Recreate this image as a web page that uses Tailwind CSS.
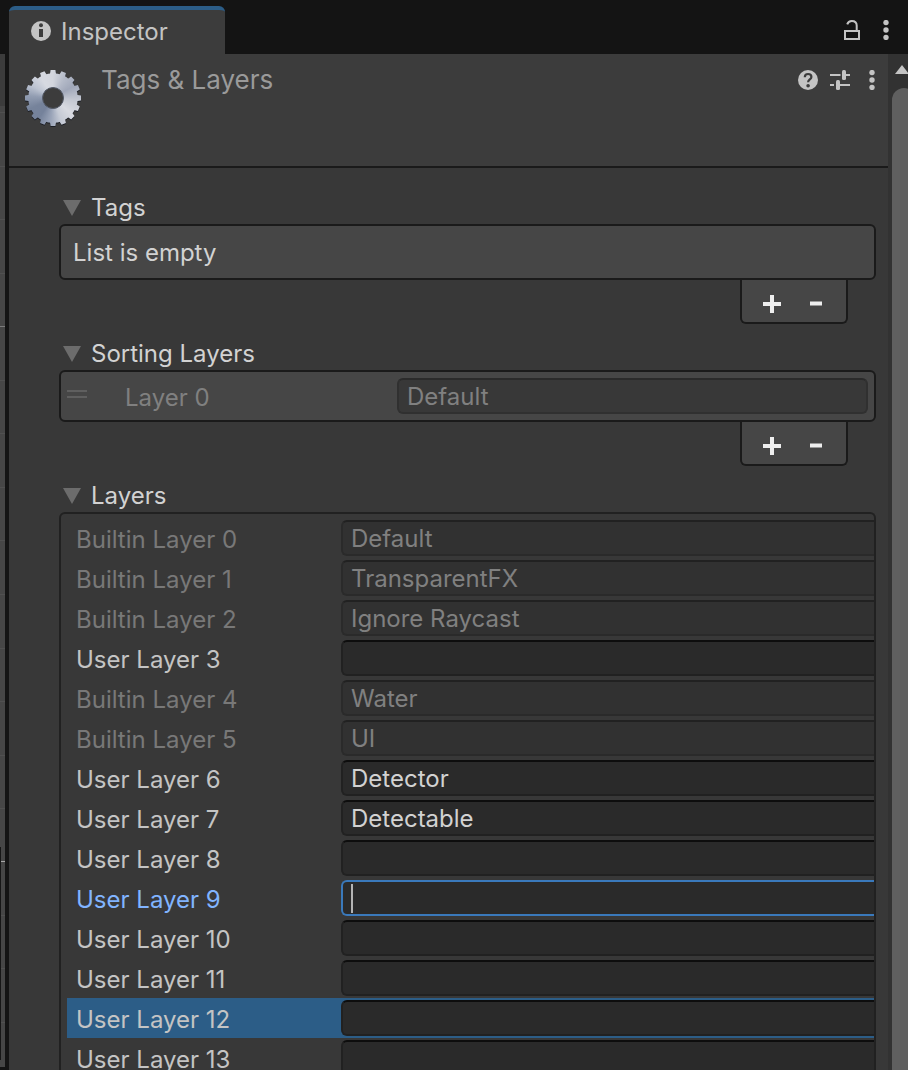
<!DOCTYPE html>
<html lang="en">
<head>
<meta charset="utf-8">
<title>Inspector</title>
<script src="https://cdn.jsdelivr.net/npm/@tailwindcss/browser@4"></script>
</head>
<body class="flex h-screen overflow-hidden bg-[#141414] font-['Inter',sans-serif] text-2xl text-[#c4c4c4]">

<!-- edge of the neighbouring panel -->
<svg class="mt-[54px] w-[5px] h-[1013px] shrink-0" viewBox="0 0 5 1013" aria-hidden="true">
  <rect width="5" height="52" fill="#3c3c3c"/>
  <rect y="52" width="5" height="961" fill="#464646"/>
  <path stroke="#505050" d="M0 58.500h5M0 112.500h5M0 165.500h5M0 219.500h5M0 326.500h5M0 379.500h5M0 433.500h5M0 486.500h5M0 540.500h5M0 594.500h5M0 647.500h5M0 701.500h5M0 754.500h5M0 861.500h5M0 914.500h5M0 968.500h5"/>
  <path stroke="#7c7c7c" d="M0 272.500h5"/>
  <path stroke="#a8a8a8" d="M0 807.500h5"/>
  <rect y="793" width="1" height="213" fill="#161616"/>
</svg>

<main class="ml-1 flex min-w-0 grow flex-col">
  <header class="flex h-[54px] shrink-0 items-end justify-between">
    <div class="flex h-12 w-[216px] items-center gap-2.5 rounded-t-md border-t-4 border-[#2c5d87] bg-[#3c3c3c] pl-[22px]">
      <svg class="mb-0.5 size-5" viewBox="0 0 20 20" aria-hidden="true"><circle cx="10" cy="10" r="10" fill="#c4c4c4"/><circle cx="10" cy="4.300" r="2" fill="#3c3c3c"/><path d="M8 8h4v8H8z" fill="#3c3c3c"/></svg>
      <h1 class="leading-8">Inspector</h1>
    </div>
    <div class="flex gap-[18px] pr-[16px] pb-3.5">
      <button class="block" aria-label="Lock"><svg class="h-5 w-5" viewBox="0 0 20 20" fill="none" stroke="#c4c4c4" stroke-width="2"><path d="M3 11h14v8H3zM5.200 4.300C6 2 7.500 1 9.800 1c3.400 0 4.900 1.800 4.900 4.600V11"/></svg></button>
      <button class="block" aria-label="Window menu"><svg class="h-5 w-3" viewBox="0 0 12 20" fill="#c4c4c4"><circle cx="6" cy="2.600" r="2.700"/><circle cx="6" cy="10" r="2.700"/><circle cx="6" cy="17.400" r="2.700"/></svg></button>
    </div>
  </header>

  <div class="flex min-h-0 grow bg-[#383838]">
    <div class="min-w-0 grow overflow-hidden">
      <section class="flex h-[114px] items-start border-b-2 border-[#1a1a1a] bg-[#3c3c3c] pl-4 pr-2.5">
        <svg class="mt-4 h-[58px] w-14 shrink-0" viewBox="0 0 56 58" aria-hidden="true">
          <defs>
            <g id="tooth"><path d="M24.800 5l.8-5h4.800l.8 5zM24.800 51l.8 5h4.800l.8-5z"/></g>
            <g id="teeth"><use href="#tooth"/><use href="#tooth" transform="rotate(22.500 28 28)"/><use href="#tooth" transform="rotate(45 28 28)"/><use href="#tooth" transform="rotate(67.500 28 28)"/><use href="#tooth" transform="rotate(90 28 28)"/><use href="#tooth" transform="rotate(112.500 28 28)"/><use href="#tooth" transform="rotate(135 28 28)"/><use href="#tooth" transform="rotate(157.500 28 28)"/></g>
            <mask id="gear" maskUnits="userSpaceOnUse" x="0" y="0" width="56" height="58"><g fill="#fff"><use href="#teeth"/><circle cx="28" cy="28" r="24.800"/></g><circle cx="28" cy="28" r="10.500" fill="#000"/></mask>
          </defs>
          <g transform="translate(0 1)" fill="#1c1f26"><use href="#teeth"/><circle cx="28" cy="28" r="24.800"/></g>
          <g mask="url(#gear)"><foreignObject width="56" height="56"><div class="size-14 bg-[conic-gradient(#d3d6de_0deg,#b4bac8_30deg,#a0a7b9_60deg,#c4c8d2_95deg,#d8dae1_130deg,#c5cad5_160deg,#9ba5b9_185deg,#75829b_215deg,#76839b_245deg,#929db2_275deg,#bcc3d1_300deg,#d6d9e1_330deg,#d3d6de_360deg)]"></div></foreignObject></g>
          <circle cx="28" cy="28" r="10.500" fill="#3c3c3c" stroke="#59606e"/>
        </svg>
        <h2 class="mt-2.5 ml-5 grow text-[26px] leading-8 text-[#9a9a9a]">Tags &amp; Layers</h2>
        <div class="mt-4 flex gap-3">
          <button class="block" aria-label="Help"><svg class="size-5" viewBox="0 0 20 20"><circle cx="10" cy="10" r="10" fill="#c4c4c4"/><path d="M6.800 7.200C6.800 5 8 4 10.100 4c2 0 3.300 1.100 3.300 2.900 0 2.400-3.300 2.600-3.300 5.300" fill="none" stroke="#3c3c3c" stroke-width="2.200"/><circle cx="10.100" cy="15.800" r="1.800" fill="#3c3c3c"/></svg></button>
          <button class="block" aria-label="Presets"><svg class="size-5" viewBox="0 0 20 20" fill="#c4c4c4"><path d="M0 4h10.500v2H0zM15 4h5v2h-5zM0 14h4v2H0zM9 14h11v2H9z"/><rect x="12" width="4" height="10" rx="1.500"/><rect x="6" y="10" width="4" height="10" rx="1.500"/></svg></button>
          <button class="block pl-1" aria-label="More options"><svg class="h-5 w-3" viewBox="0 0 12 20" fill="#c4c4c4"><circle cx="6" cy="2.600" r="2.700"/><circle cx="6" cy="10" r="2.700"/><circle cx="6" cy="17.400" r="2.700"/></svg></button>
        </div>
      </section>

      <div class="flex flex-col gap-3 pt-[22px] pr-3 pl-[50px]">
        <section>
          <button class="flex h-[34px] items-center gap-2.5 pt-0.5 pl-1 text-[#d2d2d2]" aria-expanded="true"><svg class="h-4 w-[18px]" viewBox="0 0 18 16" fill="#6c6c6c"><path d="M0 0h18L9 16z"/></svg>Tags</button>
          <div class="flex h-14 items-center rounded-md border-2 border-[#1a1a1a] bg-[#464646] px-3 pt-0.5 text-[#d2d2d2]">List is empty</div>
          <div class="mr-7 ml-auto flex h-11 w-[108px] items-center justify-center gap-4 rounded-b-md border-2 border-t-0 border-[#1a1a1a] bg-[#464646] pt-1.5">
            <button class="block" aria-label="Add tag"><svg class="h-[18px] w-7" viewBox="0 0 28 18" fill="#eee"><path d="M5 7h7V0h4v7h7v4h-7v7h-4v-7H5z"/></svg></button>
            <button class="block" aria-label="Remove tag"><svg class="h-[18px] w-7" viewBox="0 0 28 18" fill="#eee"><path d="M8 6.500h12v4H8z"/></svg></button>
          </div>
        </section>

        <section>
          <button class="flex h-[34px] items-center gap-2.5 pt-0.5 pl-1 text-[#d2d2d2]" aria-expanded="true"><svg class="h-4 w-[18px]" viewBox="0 0 18 16" fill="#6c6c6c"><path d="M0 0h18L9 16z"/></svg>Sorting Layers</button>
          <div class="flex h-[52px] items-center rounded-md border-2 border-[#1a1a1a] bg-[#464646] px-1.5">
            <svg class="mb-1 h-2 w-5 shrink-0" viewBox="0 0 20 8" fill="#5f5f5f" aria-hidden="true"><path d="M0 0h20v2H0zM0 6h20v2H0z"/></svg>
            <label for="sort0" class="w-[310px] shrink-0 pt-1 pl-[38px] text-[#808080]">Layer 0</label>
            <input id="sort0" value="Default" disabled class="h-9 w-full min-w-0 rounded-md border-2 border-[#303030] border-t-[#2a2a2a] bg-[#383838] px-2 text-[#808080]">
          </div>
          <div class="mr-7 ml-auto flex h-11 w-[108px] items-center justify-center gap-4 rounded-b-md border-2 border-t-0 border-[#1a1a1a] bg-[#464646] pt-1.5">
            <button class="block" aria-label="Add sorting layer"><svg class="h-[18px] w-7" viewBox="0 0 28 18" fill="#eee"><path d="M5 7h7V0h4v7h7v4h-7v7h-4v-7H5z"/></svg></button>
            <button class="block" aria-label="Remove sorting layer"><svg class="h-[18px] w-7" viewBox="0 0 28 18" fill="#eee"><path d="M8 6.500h12v4H8z"/></svg></button>
          </div>
        </section>

        <section>
          <button class="flex h-[34px] items-center gap-2.5 pt-0.5 pl-1 text-[#d2d2d2]" aria-expanded="true"><svg class="h-4 w-[18px]" viewBox="0 0 18 16" fill="#6c6c6c"><path d="M0 0h18L9 16z"/></svg>Layers</button>
          <div id="layers" class="rounded-t-md border-2 border-b-0 border-[#212121] pt-1 pl-1.5"></div>
        </section>
      </div>
    </div>

    <div class="flex w-5 shrink-0 flex-col overflow-hidden bg-[#323232] pl-1">
      <svg class="mt-[11px] ml-[3px] h-[9px] w-[14px] shrink-0" viewBox="0 0 14 9" fill="#c4c4c4" aria-hidden="true"><path d="M7 0l7 9H0z"/></svg>
      <div class="mt-3.5 w-6 grow rounded-t-full bg-[#5f5f5f]"></div>
    </div>
  </div>
</main>

<script>
const names = {0: 'Default', 1: 'TransparentFX', 2: 'Ignore Raycast', 4: 'Water', 5: 'UI', 6: 'Detector', 7: 'Detectable'};
const builtin = [0, 1, 2, 4, 5], focused = 9, selected = 12;
let html = '';
for (let i = 0; i < 14; i++) {
  const off = builtin.includes(i);
  const row = i === selected ? 'bg-[#2c5d87]' : '';
  const text = off ? 'text-[#787878]' : i === focused ? 'text-[#81b4ff]' : 'text-[#c4c4c4]';
  const field = off ? 'border-[#2a2a2a] border-t-[#212121] bg-[#313131] text-[#808080]'
    : i === focused ? 'border-[#3a79bb] bg-[#2a2a2a] caret-transparent'
    : 'border-[#212121] border-t-[#0d0d0d] bg-[#2a2a2a] text-[#d2d2d2]';
  html += `<div class="flex h-10 items-center ${row}">
    <label for="layer${i}" class="w-[274px] shrink-0 pt-1 pl-[9px] ${text}">${off ? 'Builtin' : 'User'} Layer ${i}</label>
    <div class="relative h-9 grow">
      <input id="layer${i}" value="${names[i] || ''}" ${off ? 'disabled' : ''} class="block h-9 w-full rounded-l-md border-2 border-r-0 px-2 outline-none ${field}">
      ${i === focused ? '<span class="absolute top-1 left-2.5 h-[29px] w-0.5 bg-[#b4b4b4]"></span>' : ''}
    </div>
  </div>`;
}
document.getElementById('layers').innerHTML = html;
</script>
</body>
</html>
